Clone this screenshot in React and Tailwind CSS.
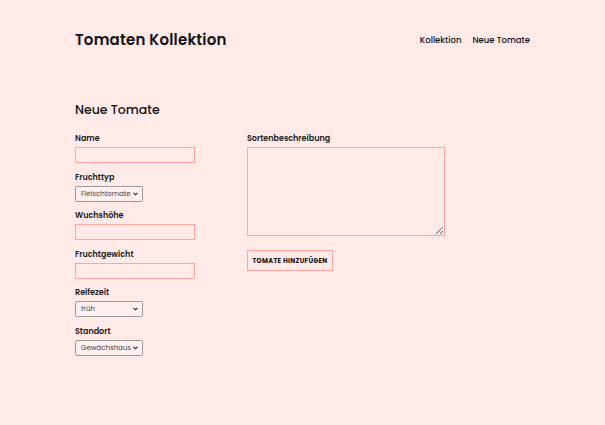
import React from "react";

const font = { fontFamily: "Poppins, Inter, 'Open Sans', sans-serif" };

function Label({ children }) {
  return <label className="block text-[8px] font-semibold text-[#1a1a1a] leading-[10px] mb-[3px]">{children}</label>;
}

function TextInput() {
  return <input type="text" className="block w-[120px] h-[16px] border border-[#ffa49e] bg-[#ffeae8] outline-none" />;
}

function Select({ options }) {
  return (
    <div className="relative w-[68px] h-[16px]">
      <select className="appearance-none block w-[68px] h-[16px] border border-[#9a9a9a] rounded-[2px] bg-[#fff0ef] text-[7px] leading-[14px] py-0 text-[#444] pl-[5px] pr-[10px] outline-none">
        {options.map((o) => (
          <option key={o}>{o}</option>
        ))}
      </select>
      <svg className="absolute right-[5px] top-[6px] pointer-events-none" width="5" height="4" viewBox="0 0 5 4">
        <path d="M0.5 0.8 L2.5 2.8 L4.5 0.8" fill="none" stroke="#222" strokeWidth="1.1" />
      </svg>
    </div>
  );
}

export default function App() {
  return (
    <div className="min-h-[425px] w-full bg-[#ffeae8]" style={font}>
      <div className="mx-[75px] pt-[30px]">
        <header className="flex items-center justify-between h-[20px]">
          <h1 className="text-[15px] font-semibold text-[#111] tracking-[0.2px]">Tomaten Kollektion</h1>
          <nav className="flex gap-[11px] text-[8.5px] font-medium text-[#111]">
            <a>Kollektion</a>
            <a>Neue Tomate</a>
          </nav>
        </header>
        <h2 className="mt-[51px] text-[12.5px] font-medium text-[#111] leading-[18px]">Neue Tomate</h2>
        <form className="mt-[15px] flex gap-[52px]">
          <div className="flex flex-col gap-[9.5px]">
            <div><Label>Name</Label><TextInput /></div>
            <div><Label>Fruchttyp</Label><Select options={["Fleischtomate", "Cocktailtomate", "Kirschtomate"]} /></div>
            <div><Label>Wuchshöhe</Label><TextInput /></div>
            <div><Label>Fruchtgewicht</Label><TextInput /></div>
            <div><Label>Reifezeit</Label><Select options={["früh", "mittel", "spät"]} /></div>
            <div><Label>Standort</Label><Select options={["Gewächshaus", "Freiland", "Balkon"]} /></div>
          </div>
          <div className="flex flex-col">
            <Label>Sortenbeschreibung</Label>
            <textarea className="block w-[198px] h-[89px] border border-[#ffa49e] bg-[#ffeae8] outline-none resize-y" />
            <button type="button" className="mt-[14px] self-start h-[21px] w-[86px] border border-[#ffa49e] bg-[#ffeae8] text-[6.5px] font-bold tracking-[0.3px] text-[#111]">
              TOMATE HINZUFÜGEN
            </button>
          </div>
        </form>
      </div>
    </div>
  );
}
